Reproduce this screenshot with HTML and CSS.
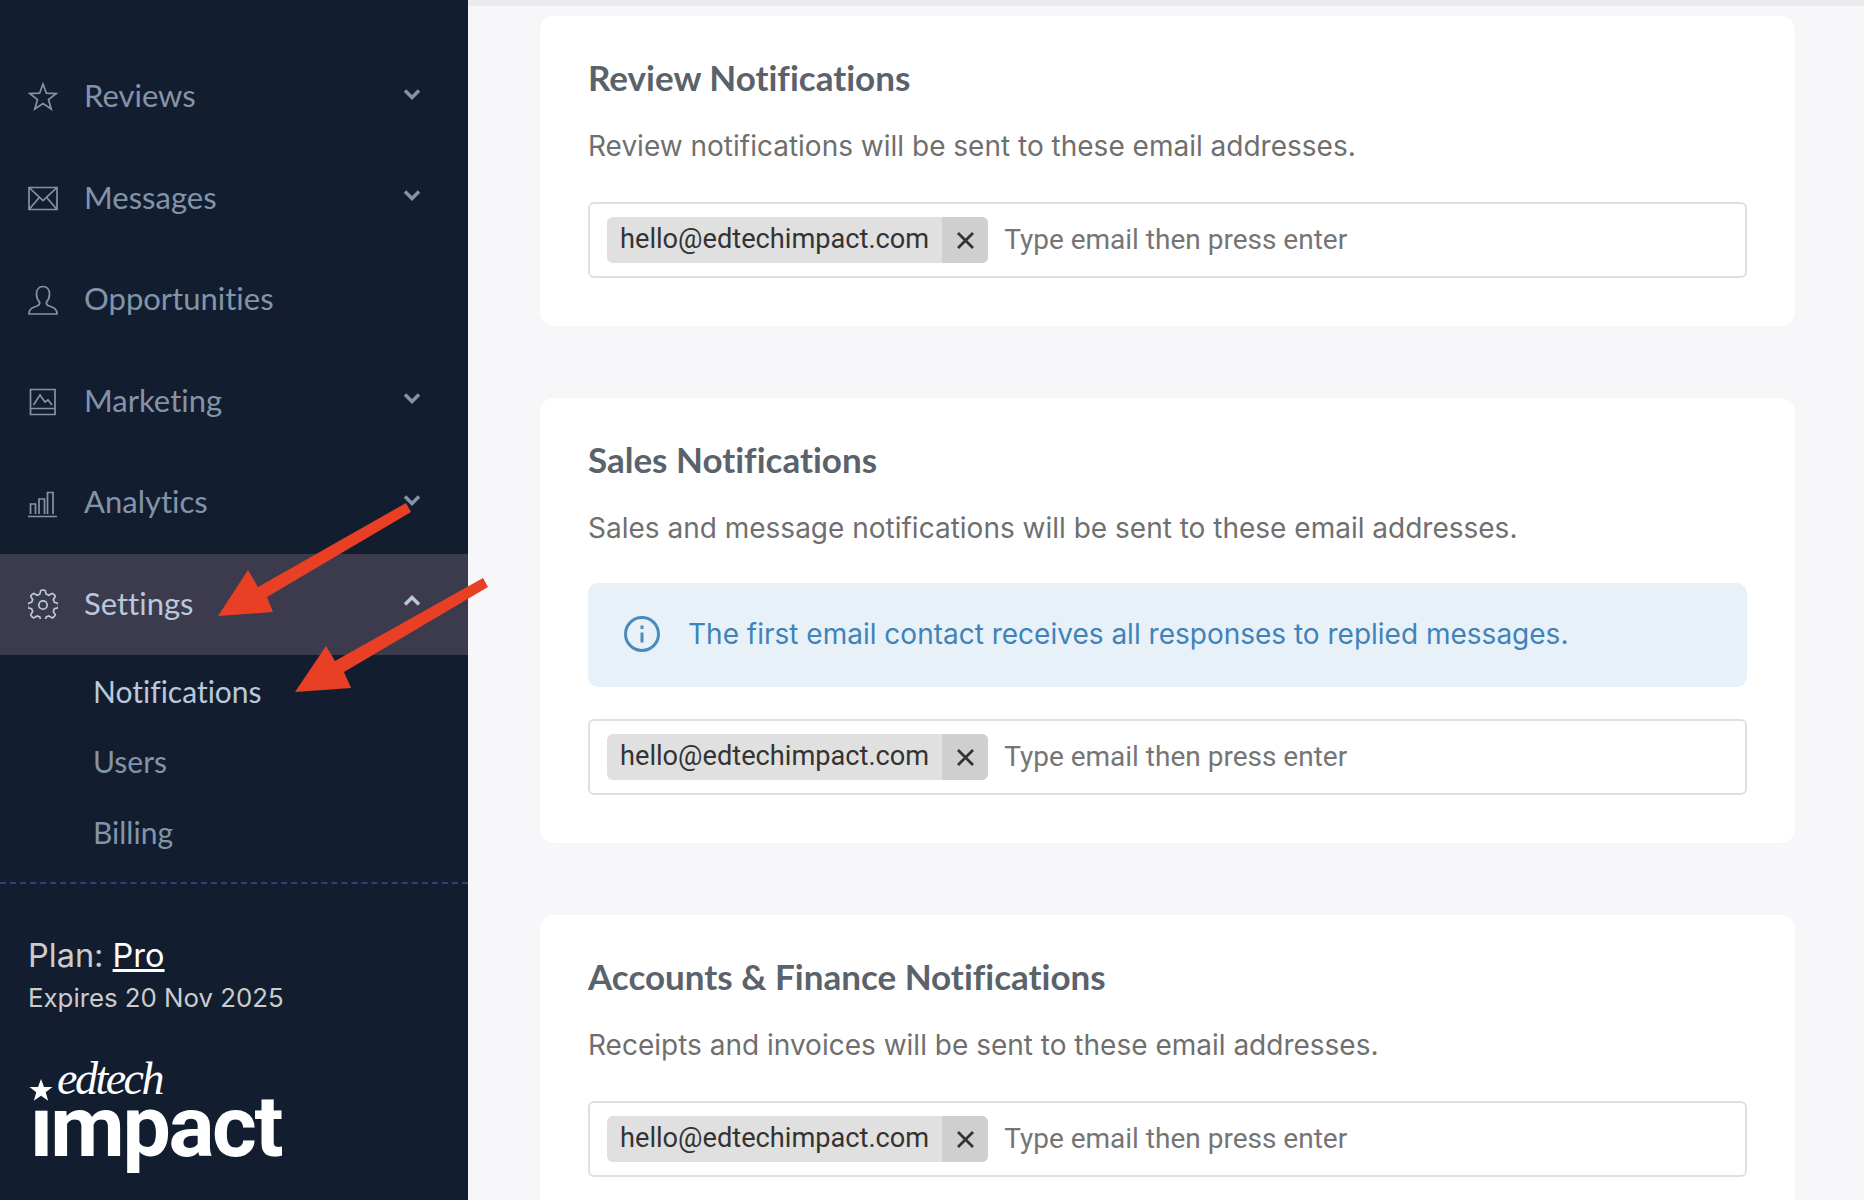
FILE: index.html
```html
<!DOCTYPE html>
<html lang="en">
<head>
    <meta charset="UTF-8">
    <title>Notifications - Edtech Impact</title>
    <link rel="stylesheet" href="styles.css">
</head>
<body>
    <div class="app">
        <aside class="sidebar">
            <nav class="nav">
                <a class="nav-item" href="#">
                    <svg class="nav-icon" viewBox="0 0 30 30"><path d="M15 2l3.400 9.200 9.800.4-7.700 6 2.700 9.400-8.200-5.500L6.800 27l2.700-9.400-7.700-6 9.800-.4z"/></svg>
                    <span class="nav-label">Reviews</span>
                    <svg class="chevron" viewBox="0 0 18 12"><path d="M2 2.500l7 7 7-7"/></svg>
                </a>
                <a class="nav-item" href="#">
                    <svg class="nav-icon" viewBox="0 0 30 30"><path d="M1 4.500h28v22H1zM1 4.500l14 13 14-13M1 26.500l10.500-12.200M29 26.500L18.500 14.300"/></svg>
                    <span class="nav-label">Messages</span>
                    <svg class="chevron" viewBox="0 0 18 12"><path d="M2 2.500l7 7 7-7"/></svg>
                </a>
                <a class="nav-item" href="#">
                    <svg class="nav-icon" viewBox="0 0 30 30"><path d="M1 29c0-5 3-6.500 8-8 2.500-.8 3-2 2.500-4-2-2-3-4.500-3-8 0-4.500 2.500-7.500 6.500-7.500s6.500 3 6.500 7.500c0 3.500-1 6-3 8-.5 2 0 3.200 2.500 4 5 1.500 8 3 8 8z"/></svg>
                    <span class="nav-label">Opportunities</span>
                </a>
                <a class="nav-item" href="#">
                    <svg class="nav-icon" viewBox="0 0 30 30"><path d="M2.500 3.500H27v25H2.500zM2.500 22.500H27M5.500 19L12 9l5 7 3-2 4 5"/></svg>
                    <span class="nav-label">Marketing</span>
                    <svg class="chevron" viewBox="0 0 18 12"><path d="M2 2.500l7 7 7-7"/></svg>
                </a>
                <a class="nav-item" href="#">
                    <svg class="nav-icon" viewBox="0 0 30 30"><path d="M0 28.500h29M2.500 26V16h5v10M11 26V11h5.500v15M19.500 26V4.500H25V26"/></svg>
                    <span class="nav-label">Analytics</span>
                    <svg class="chevron" viewBox="0 0 18 12"><path d="M2 2.500l7 7 7-7"/></svg>
                </a>
                <a class="nav-item active" href="#">
                    <svg class="nav-icon" viewBox="0 0 30 30"><path d="M12.800 1.500c.5-.6 3.900-.6 4.400 0l1 3.700 2.700 1.100 3.300-2c.8 0 3.200 2.400 3.100 3.100l-2 3.300 1.100 2.700 3.700 1c.6.5.6 3.900 0 4.400l-3.700 1-1.100 2.700 2 3.300c.1.700-2.300 3.100-3.100 3.100l-3.300-2-2.700 1.100-1 3.700c-.5.6-3.900.6-4.400 0l-1-3.700-2.700-1.100-3.300 2c-.8 0-3.200-2.400-3.100-3.100l2-3.300-1.100-2.700-3.700-1c-.6-.5-.6-3.900 0-4.400l3.700-1 1.100-2.700-2-3.300c-.1-.7 2.300-3.100 3.100-3.100l3.300 2 2.700-1.100z"/><circle cx="15" cy="16" r="4.200"/></svg>
                    <span class="nav-label">Settings</span>
                    <svg class="chevron" viewBox="0 0 18 12"><path d="M2 9.500l7-7 7 7"/></svg>
                </a>
                <div class="subnav">
                    <a class="subnav-item active" href="#">Notifications</a>
                    <a class="subnav-item" href="#">Users</a>
                    <a class="subnav-item" href="#">Billing</a>
                </div>
            </nav>
            <div class="plan">
                <div class="plan-name">Plan: <a href="#">Pro</a></div>
                <div class="plan-expiry">Expires 20 Nov 2025</div>
            </div>
            <div class="logo">
                <div class="logo-top">
                    <svg class="logo-star" viewBox="0 0 24 32"><path d="M12 1l3 8h8.500l-6.800 5.200 2.500 8.500-7.200-5-7.200 5 2.500-8.500L.5 9H9z"/></svg>
                    <span class="logo-edtech">edtech</span>
                </div>
                <div class="logo-impact">impact</div>
            </div>
        </aside>

        <main class="main">
            <div class="topbar"></div>
            <div class="cards">
                <section class="card">
                    <h2>Review Notifications</h2>
                    <p>Review notifications will be sent to these email addresses.</p>
                    <div class="email-input">
                        <span class="tag"><span class="tag-text">hello@edtechimpact.com</span><span class="tag-remove"><svg viewBox="0 0 17 17"><path d="M1 1l15 15M16 1L1 16"/></svg></span></span>
                        <input type="text" placeholder="Type email then press enter">
                    </div>
                </section>

                <section class="card">
                    <h2>Sales Notifications</h2>
                    <p>Sales and message notifications will be sent to these email addresses.</p>
                    <div class="info-box">
                        <svg class="info-icon" viewBox="0 0 36 36"><circle cx="18" cy="18" r="16.500"/><path d="M18 16.500v10M18 9.500v3.500"/></svg>
                        <span>The first email contact receives all responses to replied messages.</span>
                    </div>
                    <div class="email-input">
                        <span class="tag"><span class="tag-text">hello@edtechimpact.com</span><span class="tag-remove"><svg viewBox="0 0 17 17"><path d="M1 1l15 15M16 1L1 16"/></svg></span></span>
                        <input type="text" placeholder="Type email then press enter">
                    </div>
                </section>

                <section class="card">
                    <h2>Accounts &amp; Finance Notifications</h2>
                    <p>Receipts and invoices will be sent to these email addresses.</p>
                    <div class="email-input">
                        <span class="tag"><span class="tag-text">hello@edtechimpact.com</span><span class="tag-remove"><svg viewBox="0 0 17 17"><path d="M1 1l15 15M16 1L1 16"/></svg></span></span>
                        <input type="text" placeholder="Type email then press enter">
                    </div>
                </section>
            </div>
        </main>
    </div>

    <!-- red annotation arrows drawn over the screenshot -->
    <svg class="arrows" viewBox="0 0 1864 1200">
        <polygon points="406,503 411,512 267,597 273,612 218,616 248,570 258,587"/>
        <polygon points="483,578 488,587 344,672 351,688 295,692 326,646 335,661"/>
    </svg>
</body>
</html>
```

FILE: styles.css
```css
html, body {
    margin: 0;
    height: 1200px;
    overflow: hidden;
}
body {
    position: relative;
    font-family: Inter, sans-serif;
    background-color: #f7f7f9;
}
a {
    text-decoration: none;
}
.app {
    display: flex;
    height: 1200px;
}

/* sidebar */
.sidebar {
    width: 468px;
    flex-shrink: 0;
    background-color: #121e30;
    box-sizing: border-box;
    padding-top: 46px;
}
.nav-item {
    display: flex;
    align-items: center;
    height: 101.500px;
    padding: 0 46px 0 28px;
    color: #8394a8;
    font-family: Lato, sans-serif;
    font-size: 31px;
    font-variant-ligatures: none;
}
.nav-item.active {
    background-color: #3b3b4d;
    color: #b9c8dc;
}
.nav-icon {
    width: 30px;
    height: 30px;
    margin-right: 26px;
    fill: none;
    stroke: currentColor;
    stroke-width: 1.7;
}
.nav-label {
    flex: 1;
    margin-top: -3px;
}
.chevron {
    width: 18px;
    height: 12px;
    margin-top: -6px;
    margin-right: 1px;
    fill: none;
    stroke: currentColor;
    stroke-width: 3.500;
}
.subnav {
    display: flex;
    flex-direction: column;
    padding: 1px 0 14px;
    border-bottom: 2px dashed #2b4570;
}
.subnav-item {
    display: flex;
    align-items: center;
    height: 70.500px;
    padding: 0 0 1px 93px;
    box-sizing: border-box;
    color: #8394a8;
    font-family: Lato, sans-serif;
    font-size: 30px;
    font-variant-ligatures: none;
}
.subnav-item.active {
    color: #b9c8dc;
}
.plan {
    padding: 50px 28px 0;
    color: #cccccc;
}
.plan-name {
    font-size: 32.500px;
    line-height: 44px;
}
.plan-name a {
    color: #ffffff;
    text-decoration: underline;
}
.plan-expiry {
    font-size: 25.800px;
    line-height: 40px;
}
.logo {
    margin: 38px 0 0 29px;
    color: #ffffff;
}
.logo-top {
    position: relative;
    z-index: 1;
    display: flex;
    align-items: flex-end;
    height: 46px;
}
/* the logo's i has no dot, the star's box hides it */
.logo-star {
    width: 24px;
    height: 32px;
    margin-bottom: -8px;
    fill: #ffffff;
    background-color: #121e30;
}
.logo-edtech {
    margin-left: 4px;
    font-family: "Liberation Serif", serif;
    font-style: italic;
    font-size: 46px;
    line-height: 46px;
    letter-spacing: -2.500px;
}
.logo-impact {
    margin: -20px 0 0 1px;
    font-family: Roboto, sans-serif;
    font-weight: 700;
    font-size: 86px;
    line-height: 90px;
    letter-spacing: -2.400px;
}

/* main area */
.main {
    flex: 1;
    min-width: 0;
}
.topbar {
    height: 6px;
    background-color: #ebebf0;
}
.cards {
    display: flex;
    flex-direction: column;
    gap: 72px;
    padding: 10px 69px 0 72px;
}
.card {
    background: white;
    padding: 43px 48px 48px 48px;
    border-radius: 14px;
    box-shadow: 0 0 16px rgba(0,0,0,0.012);
}
.card h2 {
    margin: -2px 0 0;
    color: #5a626c;
    font-family: Lato, sans-serif;
    font-size: 35px;
    font-weight: 700;
    line-height: 40px;
    font-variant-ligatures: none;
}
.card p {
    margin: 29px 0 0;
    color: #6f6f6f;
    font-size: 28px;
    line-height: 40px;
}
.info-box {
    display: flex;
    align-items: center;
    height: 104px;
    margin-top: 35px;
    padding: 0 0 2px 36px;
    box-sizing: border-box;
    background-color: #e8f1f8;
    border-radius: 10px;
    color: #3f83b8;
    font-size: 28px;
}
.info-icon {
    width: 36px;
    height: 36px;
    margin-right: 28px;
    fill: none;
    stroke: #4a8bbd;
    stroke-width: 3;
}
.email-input {
    display: flex;
    align-items: center;
    box-sizing: border-box;
    height: 76px;
    margin-top: 36px;
    padding-left: 17px;
    background: white;
    border: 2px solid #e0e0e0;
    border-radius: 6px;
}
.info-box + .email-input {
    margin-top: 32px;
}
.tag {
    display: flex;
    height: 46px;
    background-color: #e0e0e0;
    border-radius: 6px;
    overflow: hidden;
    font-family: Roboto, sans-serif;
    font-size: 27.200px;
    color: #333333;
}
.tag-text {
    display: flex;
    align-items: center;
    padding: 0 13px 2px;
}
.tag-remove {
    display: flex;
    align-items: center;
    justify-content: center;
    width: 46px;
    background-color: #cfcfcf;
}
.tag-remove svg {
    width: 17px;
    height: 17px;
    fill: none;
    stroke: #333333;
    stroke-width: 2.800;
}
.email-input input {
    flex: 1;
    min-width: 0;
    margin: 0 0 2px 16px;
    border: none;
    outline: none;
    padding: 0;
    background: none;
    font-family: Roboto, sans-serif;
    font-size: 28px;
}
.email-input input::placeholder {
    color: #757575;
    opacity: 1;
}

/* annotation overlay */
.arrows {
    position: absolute;
    top: 0;
    left: 0;
    width: 1864px;
    height: 1200px;
    fill: #e93f25;
    pointer-events: none;
}
```
